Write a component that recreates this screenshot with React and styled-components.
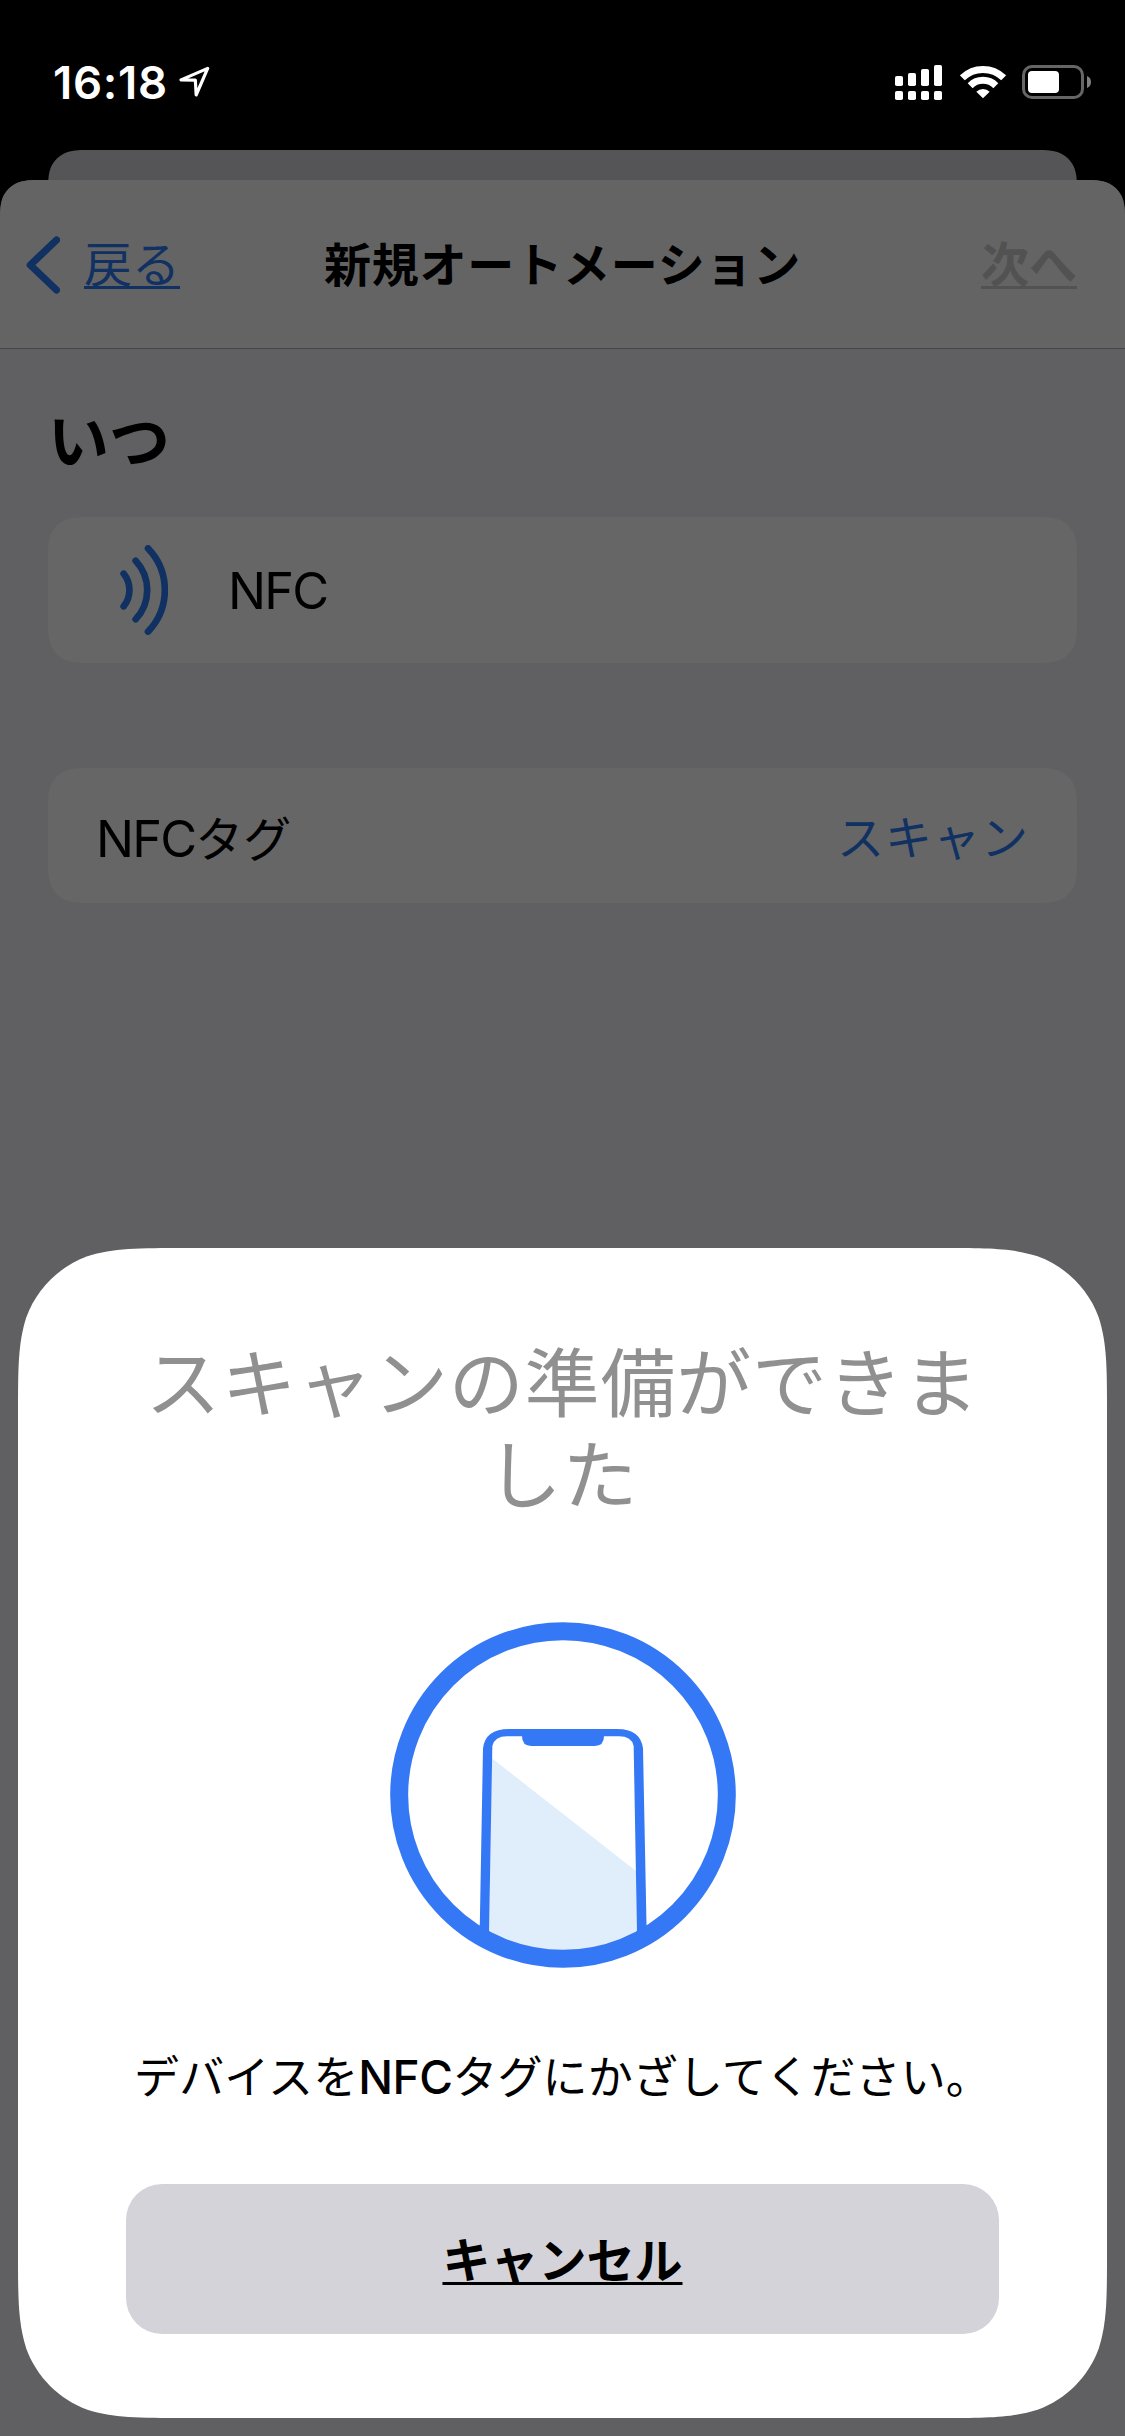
import React from 'react';
import styled, { createGlobalStyle } from 'styled-components';

const GlobalStyle = createGlobalStyle`
  * {
    box-sizing: border-box;
  }

  body {
    margin: 0;
    background: #000;
    font-family: Inter, 'Noto Sans CJK JP', sans-serif;
  }
`;

// iOS style continuous corners, as a clip-path value
const smoothCorners = (w, h, r) => {
  const a = 1.528665 * r;
  const b = 1.088493 * r;
  const c = 0.868407 * r;
  const d = 0.631494 * r;
  const e = 0.074911 * r;
  const f = 0.372824 * r;
  const g = 0.16906 * r;
  return `path('M${a} 0 L${w - a} 0
    C${w - b} 0 ${w - c} 0 ${w - d} ${e}
    C${w - f} ${g} ${w - g} ${f} ${w - e} ${d}
    C${w} ${c} ${w} ${b} ${w} ${a} L${w} ${h - a}
    C${w} ${h - b} ${w} ${h - c} ${w - e} ${h - d}
    C${w - g} ${h - f} ${w - f} ${h - g} ${w - d} ${h - e}
    C${w - c} ${h} ${w - b} ${h} ${w - a} ${h} L${a} ${h}
    C${b} ${h} ${c} ${h} ${d} ${h - e}
    C${f} ${h - g} ${g} ${h - f} ${e} ${h - d}
    C0 ${h - c} 0 ${h - b} 0 ${h - a} L0 ${a}
    C0 ${b} 0 ${c} ${e} ${d}
    C${g} ${f} ${f} ${g} ${d} ${e}
    C${c} 0 ${b} 0 ${a} 0 Z')`.replace(/\s+/g, ' ');
};

const Screen = styled.div`
  position: relative;
  display: flex;
  flex-direction: column;
  width: 1125px;
  height: 2436px;
  overflow: hidden;
  background: #000;
`;

const StatusBar = styled.div`
  display: flex;
  justify-content: space-between;
  height: 150px;
  padding: 60px 34px 0 53px;
`;

const StatusGroup = styled.div`
  display: flex;
  align-items: center;
  height: 44px;
`;

const Time = styled.span`
  margin-right: 11px;
  font-size: 45.5px;
  font-weight: 600;
  letter-spacing: 0.7px;
  color: #fff;
`;

const Icon = styled.svg`
  display: block;
  flex: none;
  margin-left: ${({ $left }) => $left || 0}px;
`;

const BackSheet = styled.div`
  height: 30px;
  margin: 0 48px;
  background: #555557;
  clip-path: ${smoothCorners(1029, 200, 30)};
`;

const Sheet = styled.div`
  flex: 1;
  background: #606062;
  clip-path: ${smoothCorners(1125, 2400, 30)};
`;

const Header = styled.div`
  display: grid;
  grid-template-columns: 1fr auto 1fr;
  align-items: center;
  height: 169px;
  padding: 2px 48px 0 26px;
  border-bottom: 1px solid #454547;
  background: #646464;
`;

const BackButton = styled.div`
  display: flex;
  align-items: center;
`;

const HeaderLink = styled.span`
  justify-self: end;
  font-size: 48px;
  font-weight: ${({ $bold }) => ($bold ? 700 : 400)};
  line-height: 72px;
  color: ${({ $disabled }) => ($disabled ? '#525252' : '#103162')};
  text-decoration: underline;
  text-decoration-thickness: 3px;
  text-decoration-skip-ink: none;
  text-underline-offset: 4px;
`;

const BackLabel = styled(HeaderLink)`
  margin-left: 24px;
`;

const Title = styled.h1`
  margin: 0 0 0 22px;
  font-size: 47px;
  font-weight: 700;
  line-height: 72px;
  letter-spacing: 0.8px;
  color: #000;
`;

const Section = styled.div`
  padding: 0 48px;
`;

const SectionTitle = styled.h2`
  height: 168px;
  margin: 0;
  padding-top: 48px;
  font-size: 61px;
  font-weight: 700;
  line-height: 90px;
  color: #000;
`;

const Card = styled.div`
  display: flex;
  align-items: center;
  height: ${({ $height }) => $height}px;
  margin-bottom: 105px;
  padding: 0 48px;
  background: #666;
  clip-path: ${({ $height }) => smoothCorners(1029, $height, 30)};
`;

const CardLabel = styled.span`
  margin-left: ${({ $left }) => $left || 0}px;
  font-size: 48px;
  color: #000;
`;

const Latin = styled.span`
  font-size: ${({ $size }) => $size}px;
  font-weight: ${({ $weight }) => $weight || 400};
  letter-spacing: ${({ $spacing }) => $spacing}px;
`;

const ScanLink = styled.span`
  margin-left: auto;
  padding-bottom: 3px;
  font-size: 47px;
  letter-spacing: 1px;
  color: #103162;
`;

const Dialog = styled.div`
  position: absolute;
  left: 18px;
  bottom: 18px;
  display: flex;
  flex-direction: column;
  align-items: center;
  width: 1089px;
  height: 1170px;
  padding-top: 90px;
  background: #fff;
  clip-path: ${smoothCorners(1089, 1170, 110)};
`;

const DialogTitle = styled.h2`
  width: 860px;
  height: 184px;
  margin: 0 0 100px;
  font-size: 75px;
  font-weight: 400;
  line-height: 92px;
  letter-spacing: 0.8px;
  text-align: center;
  color: #909090;
`;

const Message = styled.p`
  height: 70px;
  margin: 74px 0 72px;
  font-size: 45px;
  line-height: 70px;
  letter-spacing: 0.1px;
  white-space: nowrap;
  color: #000;
`;

const CancelButton = styled.button`
  width: 873px;
  height: 150px;
  padding: 0 0 5px;
  border: 0;
  border-radius: 36px;
  background: #d4d3d9;
  font-family: inherit;
  font-size: 48px;
  font-weight: 700;
  color: #000;
  text-decoration: underline;
  text-decoration-thickness: 3px;
  text-decoration-skip-ink: none;
  text-underline-offset: 4px;
`;

const LocationIcon = () => (
  <Icon width="31" height="32" viewBox="534 108 93 96">
    <path
      d="M620 115 L540 149.500 L583 150.500 L585.500 195 Z"
      fill="none"
      stroke="#fff"
      strokeWidth="9.500"
      strokeLinejoin="round"
    />
  </Icon>
);

const bars = [10, 13, 17, 21];

const SignalIcon = () => (
  <Icon width="47" height="35" viewBox="0 0 47 35" fill="#fff">
    {bars.map((height, i) => (
      <g key={height}>
        <rect x={i * 13} y={21 - height} width="8" height={height} rx="1.800" />
        <rect x={i * 13} y="26" width="8" height="9" rx="1.800" />
      </g>
    ))}
  </Icon>
);

const WifiIcon = () => (
  <Icon $left={18} width="46" height="34" viewBox="480 104 138 102">
    <g fill="none" stroke="#fff" strokeWidth="21">
      <path d="M487 142.500 A88.500 88.500 0 0 1 611 142.500" />
      <path d="M510.500 166 A54.500 54.500 0 0 1 587.500 166" />
    </g>
    <path d="M549 204 L529 184 A29 29 0 0 1 569 184 Z" fill="#fff" />
  </Icon>
);

const BatteryIcon = () => (
  <Icon $left={16} width="69" height="34" viewBox="0 0 69 34">
    <rect
      x="1.500"
      y="1.500"
      width="59"
      height="31"
      rx="8.500"
      fill="none"
      stroke="#666"
      strokeWidth="3"
    />
    <rect x="6" y="6" width="31" height="22" rx="4" fill="#fff" />
    <path d="M65 11 A6.500 6.500 0 0 1 65 23 Z" fill="#808080" />
  </Icon>
);

const ChevronIcon = () => (
  <Icon width="34" height="58" viewBox="0 0 34 58">
    <path
      d="M30.500 4 L4.300 29 L30.500 54"
      fill="none"
      stroke="#103162"
      strokeWidth="7.200"
      strokeLinecap="round"
      strokeLinejoin="round"
    />
  </Icon>
);

const WavesIcon = () => (
  <Icon $left={24} width="48" height="90" viewBox="360 495 144 270">
    <g fill="none" stroke="#103162" strokeWidth="20" strokeLinecap="round">
      <path d="M371 581 A78 78 0 0 1 371 679" />
      <path d="M407 542 A129 129 0 0 1 407 718" />
      <path d="M444 505 A180 180 0 0 1 444 755" />
    </g>
  </Icon>
);

const PhoneIcon = () => (
  <Icon width="346" height="346" viewBox="60 66 1038 1038">
    <path d="M366 475 L798 813 L801 992 Q579 1110 357 992 Z" fill="#e0eefc" />
    <path
      d="M329 1000 L339 445 Q346 387 417 387 L742 387 Q811 387 819 445 L830 1000 L801 1000 L791 438 Q785 409 747 409 L702 409 Q702 438 674 438 L484 438 Q456 438 456 409 L411 409 Q374 409 367 438 L357 1000 Z"
      fill="#3478f6"
    />
    <circle
      cx="579"
      cy="585"
      r="491.500"
      fill="none"
      stroke="#3478f6"
      strokeWidth="54"
    />
  </Icon>
);

const App = () => {
  return (
    <Screen>
      <GlobalStyle />
      <StatusBar>
        <StatusGroup>
          <Time>16:18</Time>
          <LocationIcon />
        </StatusGroup>
        <StatusGroup>
          <SignalIcon />
          <WifiIcon />
          <BatteryIcon />
        </StatusGroup>
      </StatusBar>
      <BackSheet />
      <Sheet>
        <Header>
          <BackButton>
            <ChevronIcon />
            <BackLabel>戻る</BackLabel>
          </BackButton>
          <Title>新規オートメーション</Title>
          <HeaderLink $bold $disabled>
            次へ
          </HeaderLink>
        </Header>
        <Section>
          <SectionTitle>いつ</SectionTitle>
          <Card $height={146}>
            <WavesIcon />
            <CardLabel $left={60}>
              <Latin $size={50.5} $spacing={-1.8}>
                NFC
              </Latin>
            </CardLabel>
          </Card>
          <Card $height={135}>
            <CardLabel>
              <Latin $size={50.5} $spacing={-1.8}>
                NFC
              </Latin>
              タグ
            </CardLabel>
            <ScanLink>スキャン</ScanLink>
          </Card>
        </Section>
      </Sheet>
      <Dialog>
        <DialogTitle>スキャンの準備ができました</DialogTitle>
        <PhoneIcon />
        <Message>
          デバイスを
          <Latin $size={46} $weight={450} $spacing={-0.5}>
            NFC
          </Latin>
          タグにかざしてください。
        </Message>
        <CancelButton>キャンセル</CancelButton>
      </Dialog>
    </Screen>
  );
};

export default App;
